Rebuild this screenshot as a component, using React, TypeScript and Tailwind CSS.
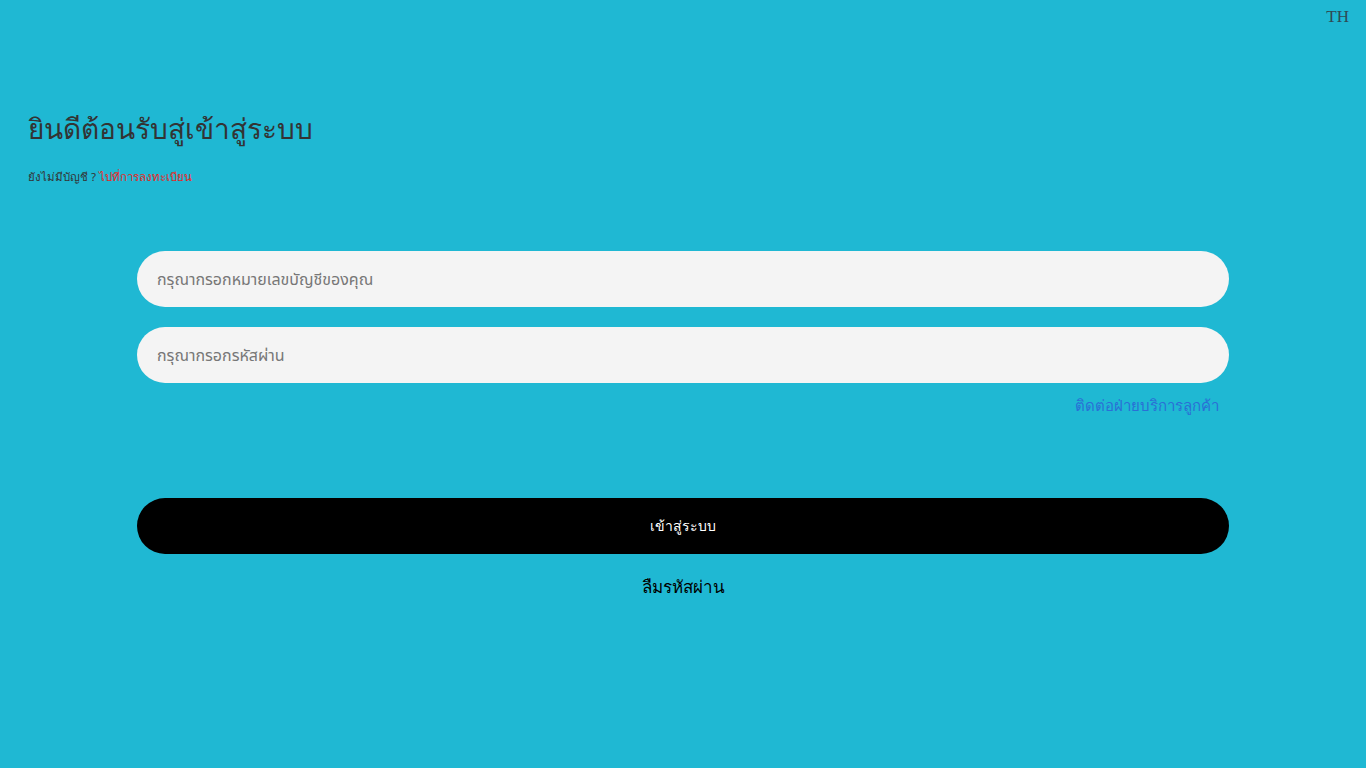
import React, { useState } from 'react';

const font = { fontFamily: '"Noto Sans", "Noto Sans Thai", sans-serif' };

export default function App() {
    const [account, setAccount] = useState('');
    const [password, setPassword] = useState('');

    return (
        <div className="min-h-screen w-full bg-[#1fb8d3] font-['Noto_Sans',sans-serif]">
            <div className="flex justify-end pr-[17px] pt-[4px]">
                <span className="font-['Liberation_Serif',serif] text-[17px] text-[#2e4a55]">TH</span>
            </div>

            <div className="pl-[28px] pt-[78px]">
                <h1 className="text-[28px] leading-[40px] text-[#333] font-normal">ยินดีต้อนรับสู่เข้าสู่ระบบ</h1>
                <p className="mt-[20px] text-[11.5px] leading-[18px] text-[#333]">
                    ยังไม่มีบัญชี ? <a className="text-[#e8261c] cursor-pointer">ไปที่การลงทะเบียน</a>
                </p>
            </div>

            <div className="mx-auto mt-[65px] w-[1092px]">
                <input
                    type="text"
                    value={account}
                    onChange={(e) => setAccount(e.target.value)}
                    placeholder="กรุณากรอกหมายเลขบัญชีของคุณ"
                    className="block h-[56px] w-full rounded-full bg-[#f4f4f4] px-[20px] text-[16px] text-[#333] placeholder:text-[#777] outline-none"
                    style={font}
                />
                <input
                    type="password"
                    value={password}
                    onChange={(e) => setPassword(e.target.value)}
                    placeholder="กรุณากรอกรหัสผ่าน"
                    className="mt-[20px] block h-[56px] w-full rounded-full bg-[#f4f4f4] px-[20px] text-[16px] text-[#333] placeholder:text-[#777] outline-none"
                    style={font}
                />
                <div className="flex justify-end pr-[10px] pt-[10px]">
                    <a className="text-[15px] leading-[24px] text-[#2a6fd6] cursor-pointer">ติดต่อฝ่ายบริการลูกค้า</a>
                </div>

                <button className="mt-[81px] block h-[56px] w-full rounded-full bg-black text-[14px] font-normal text-white">
                    เข้าสู่ระบบ
                </button>
                <div className="mt-[20px] text-center text-[17px] leading-[26px] font-normal text-black">ลืมรหัสผ่าน</div>
            </div>
        </div>
    );
}
